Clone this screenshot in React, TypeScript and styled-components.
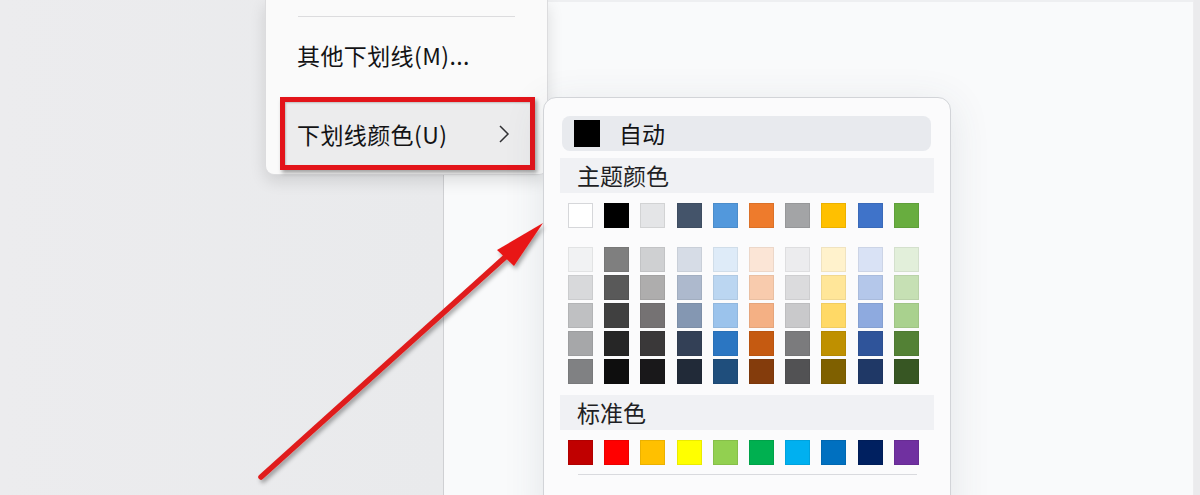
import React from 'react';
import styled, {createGlobalStyle} from 'styled-components';

const GlobalStyle = createGlobalStyle`
    html, body {
        margin: 0;
        padding: 0;
        overflow: hidden;
        background: #ebebed;
    }
    * {
        box-sizing: border-box;
    }
`;

const FONT = `"Noto Sans CJK SC", "Noto Sans", sans-serif`;

const themeRow = ['#ffffff', '#000000', '#e4e5e7', '#44546a', '#5298dc', '#ee7b2c', '#a3a4a6', '#ffc000', '#3f73c9', '#68ad3f'];

const shades = [
    ['#f1f2f3', '#d8d9db', '#bfc0c2', '#a6a7a9', '#808183'],
    ['#7f7f7f', '#595959', '#404040', '#262626', '#0e0e0e'],
    ['#cfd0d2', '#aeadad', '#757273', '#3a3839', '#19181a'],
    ['#d6dce6', '#adb9cd', '#8497b2', '#334056', '#212a38'],
    ['#deebf8', '#bbd6f1', '#9bc3ec', '#2b76c2', '#1f4e7c'],
    ['#fbe5d6', '#f8cbad', '#f4b084', '#c55a11', '#843c0c'],
    ['#ececee', '#dbdbdd', '#c9c9cb', '#7b7b7d', '#525254'],
    ['#fff2cc', '#ffe699', '#ffd966', '#bf9000', '#7f6000'],
    ['#d9e2f5', '#b4c7ea', '#8eaadf', '#2f549a', '#1f3866'],
    ['#e2efda', '#c6e0b4', '#a9d18e', '#538135', '#375623'],
];

const standardRow = ['#c00000', '#ff0000', '#ffc000', '#ffff00', '#92d050', '#00b050', '#00b0f0', '#0070c0', '#002060', '#7030a0'];

export default function App() {
    return (
        <>
            <GlobalStyle/>
            <Stage>
                <SidePane/>
                <DocPane/>

                <UnderlineMenu>
                    <Separator/>
                    <MenuItem>其他下划线(M)...</MenuItem>
                    <MarkedItem>
                        <span>下划线颜色(U)</span>
                        <Chevron viewBox="0 0 12 20">
                            <polyline points="2,2 10,10 2,18"/>
                        </Chevron>
                    </MarkedItem>
                </UnderlineMenu>

                <ColorMenu>
                    <AutoRow>
                        <AutoSwatch/>
                        <span>自动</span>
                    </AutoRow>
                    <SectionHeader $top={7}>主题颜色</SectionHeader>
                    <SwatchRow $top={10}>
                        {themeRow.map((c, i) => (
                            <Swatch key={i} $color={c} $outlined={i === 0}/>
                        ))}
                    </SwatchRow>
                    <ShadeGrid>
                        {shades.map((col, i) => (
                            <ShadeColumn key={i}>
                                {col.map((c, j) => (
                                    <Shade key={j} $color={c}/>
                                ))}
                            </ShadeColumn>
                        ))}
                    </ShadeGrid>
                    <SectionHeader $top={11}>标准色</SectionHeader>
                    <SwatchRow $top={10}>
                        {standardRow.map((c, i) => (
                            <Swatch key={i} $color={c}/>
                        ))}
                    </SwatchRow>
                    <BottomRule/>
                </ColorMenu>

                <Arrow viewBox="0 0 1200 495">
                    <defs>
                        <filter id="arrowShadow" x="-10%" y="-10%" width="130%" height="130%">
                            <feDropShadow dx="2" dy="3" stdDeviation="2" floodColor="#000" floodOpacity="0.35"/>
                        </filter>
                    </defs>
                    <g filter="url(#arrowShadow)">
                        <line x1="261" y1="477" x2="522" y2="242" stroke="#e01c1c" strokeWidth="5.5" strokeLinecap="round"/>
                        <polygon points="543,223 497,250 514,266" fill="#e81818"/>
                    </g>
                </Arrow>
            </Stage>
        </>
    );
}

const Stage = styled.div`
    position: relative;
    width: 1200px;
    height: 495px;
    display: flex;
    overflow: hidden;
    background: #ebebed;
    font-family: ${FONT};
    color: #131315;
`;

const SidePane = styled.div`
    width: 443px;
    height: 100%;
    background: linear-gradient(90deg, #ececee 0%, #e9eaec 100%);
`;

const DocPane = styled.div`
    flex: 1;
    height: 100%;
    background: #f9fafb;
    border-left: 1px solid #cfd0d3;
    border-top: 2px solid #eeeff1;
    margin-right: 7px;
    box-shadow: 1px 0 0 #ededef;
`;

const UnderlineMenu = styled.div`
    position: absolute;
    left: 265px;
    top: 0;
    width: 283px;
    height: 175px;
    display: flex;
    flex-direction: column;
    padding-top: 16px;
    background: #fafafa;
    border: 1px solid #dcdcde;
    border-top: none;
    border-radius: 0 0 9px 9px;
    box-shadow: 0 6px 16px rgba(0, 0, 0, 0.12);
`;

const Separator = styled.div`
    height: 1px;
    margin: 0 32px;
    background: #dcdcde;
`;

const MenuItem = styled.div`
    height: 62px;
    display: flex;
    align-items: center;
    padding-left: 31px;
    margin-top: 7px;
    font-size: 23px;
    letter-spacing: 0.4px;
`;

const MarkedItem = styled.div`
    margin: 11px 12px 0 14px;
    height: 73px;
    display: flex;
    align-items: center;
    justify-content: space-between;
    padding: 0 20px 0 12px;
    border: 5px solid #e3141a;
    background: #ececed;
    font-size: 23px;
    letter-spacing: 0.4px;
    box-shadow: 2px 3px 4px rgba(0, 0, 0, 0.35), inset 1px 1px 2px rgba(0, 0, 0, 0.2);
`;

const Chevron = styled.svg`
    width: 12px;
    height: 20px;
    fill: none;
    stroke: #303033;
    stroke-width: 1.5;
`;

const ColorMenu = styled.div`
    position: absolute;
    left: 543px;
    top: 97px;
    width: 408px;
    height: 430px;
    display: flex;
    flex-direction: column;
    padding: 18px 16px 0 16px;
    background: #fbfbfc;
    border: 1px solid #d2d4d8;
    border-radius: 13px;
    box-shadow: 0 8px 40px rgba(60, 70, 90, 0.12);
`;

const AutoRow = styled.div`
    height: 35px;
    margin: 0 3px 0 2px;
    display: flex;
    align-items: center;
    gap: 19px;
    padding-left: 12px;
    background: #e8eaee;
    border-radius: 8px;
    font-size: 23px;
    line-height: 1;
`;

const AutoSwatch = styled.div`
    width: 26px;
    height: 27px;
    background: #000;
`;

const SectionHeader = styled.div<{ $top: number }>`
    height: 35px;
    margin-top: ${p => p.$top}px;
    display: flex;
    align-items: center;
    padding-left: 17px;
    background: #f0f1f4;
    font-size: 23px;
    line-height: 1;
    color: #1f1f24;
`;

const SwatchRow = styled.div<{ $top: number }>`
    margin-top: ${p => p.$top}px;
    padding-left: 8px;
    display: grid;
    grid-template-columns: repeat(10, 25px);
    column-gap: 11.2px;
`;

const Swatch = styled.div<{ $color: string; $outlined?: boolean }>`
    width: 25px;
    height: 25px;
    background: ${p => p.$color};
    border: 1px solid ${p => (p.$outlined ? '#d6d7da' : 'rgba(0, 0, 0, 0.08)')};
`;

const ShadeGrid = styled.div`
    margin-top: 19px;
    padding-left: 8px;
    display: grid;
    grid-template-columns: repeat(10, 25px);
    column-gap: 11.2px;
`;

const ShadeColumn = styled.div`
    display: flex;
    flex-direction: column;
    gap: 3.5px;
`;

const Shade = styled.div<{ $color: string }>`
    width: 25px;
    height: 24.5px;
    background: ${p => p.$color};
    border: 1px solid rgba(0, 0, 0, 0.06);
`;

const BottomRule = styled.div`
    height: 1px;
    margin: 9px 17px 0 18px;
    background: #d9dade;
`;

const Arrow = styled.svg`
    position: absolute;
    left: 0;
    top: 0;
    width: 1200px;
    height: 495px;
    pointer-events: none;
`;
